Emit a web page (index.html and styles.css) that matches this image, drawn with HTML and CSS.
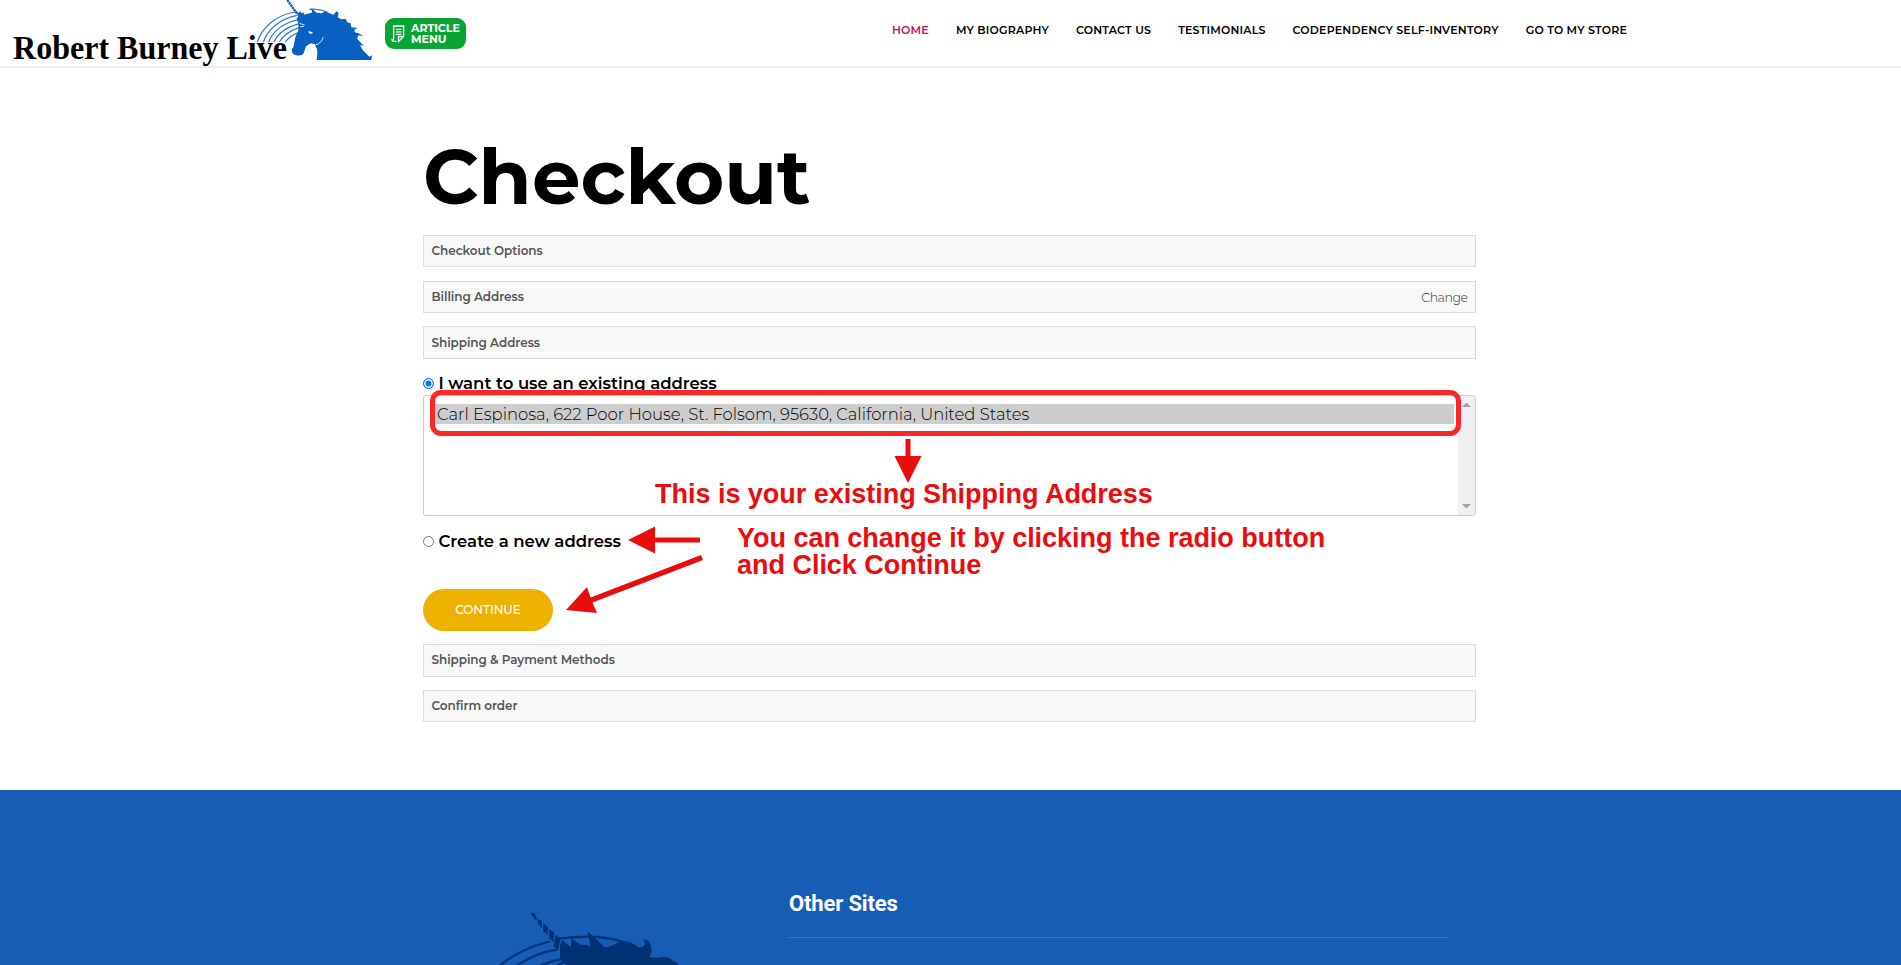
FILE: index.html
```
<!DOCTYPE html>
<html lang="en">
<head>
<meta charset="utf-8">
<title>Checkout</title>
<link rel="stylesheet" href="styles.css">
</head>
<body>
<header class="header">
  <svg class="logo" width="385" height="66" viewBox="0 0 385 66">
    <g transform="translate(240 0) scale(.33333)">
      <g fill="none" stroke="#2f78d0" stroke-width="3.6">
        <path d="M52 126C66 82 110 44 166 36"/>
        <path d="M70 126C82 90 118 56 172 46"/>
        <path d="M86 126C98 94 130 68 178 58"/>
        <path d="M102 126C114 100 142 80 180 71"/>
        <path d="M118 126C130 106 150 92 178 83"/>
        <path d="M136 126C146 112 160 103 176 97"/>
        <path d="M208 28C228 26 244 28 262 36"/>
      </g>
      <path d="M142 0L172 42" stroke="#0760c2" stroke-width="7" stroke-dasharray="7 1.5"/>
      <path fill="#0760c2" d="M165 32L173 40 182 34 184 40 191 37 192 44 203 41 216 38 214 24 230 38 245 40 256 34 265 38 280 44 290 34 296 40 293 52 304 58 316 56 323 68 318 66 332 70 334 82 354 84 344 88 344 97 356 100 370 108 354 106 352 117 366 132 372 137 360 135 368 150 388 170 396 166 394 180 230 180C232 160 234 150 228 141L224 132 212 130 198 139 191 160C186 169 170 168 160 162C153 154 155 148 160 142C164 128 164 108 174 96L176 82 174 66 170 56 175 48Z"/>
      <path fill="#fff" d="M204 94L218 96 216 102 207 100Z"/>
      <path fill="none" stroke="#fff" stroke-width="2.5" d="M250 112C246 124 238 132 226 135M178 70L194 75M180 80L192 79"/>
    </g>
    <text class="logo-text" x="13" y="59" textLength="274" lengthAdjust="spacingAndGlyphs">Robert Burney Live</text>
  </svg>
  <a class="article-btn">
    <svg width="14" height="18" viewBox="0 0 14 18" fill="none" stroke="#fff" stroke-width="1.3">
      <path d="M5.500 16.300H3Q1 16.300 1 14.300H2.600V1H12.600V11.500L7.500 16.500V11.500H12.600M4.800 4.300H10.400M4.800 6.800H10.400M4.800 9.300H10.400"/>
    </svg>
    <span class="article-label"><span>ARTICLE</span><span>MENU</span></span>
  </a>
  <nav class="nav">
    <a class="active">HOME</a>
    <a>MY BIOGRAPHY</a>
    <a>CONTACT US</a>
    <a>TESTIMONIALS</a>
    <a>CODEPENDENCY SELF-INVENTORY</a>
    <a>GO TO MY STORE</a>
  </nav>
</header>

<main class="checkout">
  <h1 class="title">Checkout</h1>
  <div class="panel">Checkout Options</div>
  <div class="panel panel-low">Billing Address <a class="change">Change</a></div>
  <div class="panel panel-low panel-shipping">Shipping Address</div>
  <label class="choice"><span class="radio checked"></span>I want to use an existing address</label>
  <div class="address-list">
    <div class="option">Carl Espinosa, 622 Poor House, St. Folsom, 95630, California, United States</div>
    <div class="scrollbar"><i class="up"></i><i class="down"></i></div>
  </div>
  <label class="choice choice-new"><span class="radio"></span>Create a new address</label>
  <a class="continue">CONTINUE</a>
  <div class="panel panel-payment">Shipping &amp; Payment Methods</div>
  <div class="panel">Confirm order</div>
</main>

<footer class="footer">
  <svg class="footer-logo" width="280" height="85" viewBox="0 0 840 255">
    <g fill="none" stroke="#03347a" stroke-width="7">
      <path d="M120 256C165 220 215 197 270 184"/>
      <path d="M172 256C210 230 250 215 292 208"/>
      <path d="M242 256Q275 242 308 237M298 176C360 168 430 166 490 186"/>
      <path d="M290 258L312 246"/>
    </g>
    <path fill="#003173" d="M211 98L222 100 230 110 229 123ZM233 116L246 123 245 144 233 130ZM250 131L264 141 262 165 249 152ZM267 148L283 157 280 187 267 173ZM287 165L301 175 295 211 281 199ZM307 181L333 202 334 175 364 195Q378 192 392 200L383 154 434 202Q462 198 476 186Q505 176 534 202C556 203 559 190 549 178C574 179 582 210 568 231Q590 236 612 231Q632 232 638 243L650 247 656 256H318L300 232 300 195Z"/>
  </svg>
  <section class="sites"><h2>Other Sites</h2></section>
</footer>

<div class="highlight"></div>
<svg class="arrow-layer" width="1901" height="965" viewBox="0 0 1901 965" fill="#e90d0d">
  <path d="M905.500 439H910.500V456H921.500L908 483L894.500 456H905.500Z"/>
  <path d="M628 540L655 526.500V537.500H700V542.500H655V553.500Z"/>
  <path d="M566 610L587 587L590.500 597.500L701 555L703 560L592.500 602.500L597 613Z"/>
</svg>
<p class="note note-existing">This is your existing Shipping Address</p>
<p class="note note-change">You can change it by clicking the radio button<br>and Click Continue</p>
</body>
</html>
```
FILE: styles.css
```
* { box-sizing: border-box; }
body {
  margin: 0;
  height: 965px;
  position: relative;
  overflow: hidden;
  background: #fff;
  color: #000;
  font-family: Montserrat, Inter, sans-serif;
}
.header {
  height: 68px;
  display: flex;
  align-items: flex-start;
  border-bottom: 2px solid #eee;
}
.logo { flex: none; overflow: visible; }
.logo-text { font: bold 33px "Liberation Serif", serif; }
.article-btn {
  width: 81px;
  height: 31px;
  margin-top: 18px;
  padding: 1px 0 0 6px;
  display: flex;
  align-items: center;
  gap: 6px;
  border-radius: 9px;
  background: #08a535;
  color: #fff;
}
.article-label {
  display: flex;
  flex-direction: column;
  font-size: 11px;
  font-weight: 700;
  line-height: 11px;
}
.nav {
  display: flex;
  gap: 27px;
  margin-left: 426px;
  padding-top: 22px;
  font-size: 11px;
  font-weight: 600;
  line-height: 16px;
  letter-spacing: .215px;
  white-space: nowrap;
}
.active { color: #c2125f; }

.checkout {
  width: 1053px;
  height: 722px;
  margin-left: 423px;
  padding-top: 68px;
  display: flex;
  flex-direction: column;
}
.title {
  margin: 0 0 7px;
  height: 92px;
  font-size: 76.8px;
  line-height: 82px;
  font-weight: 700;
}
.panel {
  height: 32px;
  flex: none;
  margin-bottom: 13.700px;
  padding: 0 7.500px 2px;
  display: flex;
  align-items: center;
  justify-content: space-between;
  border: 1px solid #dcdddf;
  background: #f8f8f8;
  color: #555;
  font-size: 12px;
  font-weight: 600;
  letter-spacing: -.050px;
}
.panel-low { padding-bottom: 0; }
.panel-shipping { height: 33px; margin-bottom: 13px; }
.panel-payment { height: 33px; margin-bottom: 13px; }
.change {
  font-size: 12.5px;
  font-weight: 300;
  letter-spacing: -.450px;
  color: #333;
  padding-top: 1px;
}
.choice {
  height: 22px;
  display: flex;
  align-items: center;
  gap: 4.500px;
  font-size: 16.500px;
  font-weight: 600;
}
.radio {
  width: 11px;
  height: 11px;
  border: 1px solid #767676;
  border-radius: 50%;
}
.checked {
  border-color: #0075ff;
  background: #0075ff;
  box-shadow: inset 0 0 0 1.5px #fff;
}
.address-list {
  height: 121px;
  margin-top: 1px;
  display: flex;
  justify-content: space-between;
  border: 1px solid #ccc;
  border-radius: 3px;
}
.option {
  width: 1021px;
  height: 20px;
  margin: 8px 0 0 9px;
  padding-left: 4px;
  background: #cdcdcd;
  color: #000;
  font-size: 16.450px;
  font-weight: 300;
  line-height: 21px;
}
.scrollbar {
  width: 17px;
  padding: 7px 4px;
  display: flex;
  flex-direction: column;
  justify-content: space-between;
  background: #f0f0f0;
}
.up, .down {
  border: 4px solid transparent;
  border-top-width: 0;
  border-bottom-color: #a3a3a3;
}
.down { transform: scaleY(-1); }
.choice-new { margin-top: 14px; }
.continue {
  width: 130px;
  height: 42px;
  margin: 37px 0 13px;
  border-radius: 21px;
  background: #edb100;
  color: #fff;
  font-size: 12px;
  font-weight: 500;
  line-height: 41px;
  letter-spacing: -.080px;
  text-align: center;
}
.footer {
  height: 175px;
  display: flex;
  align-items: flex-start;
  background: #185db5;
}
.footer-logo { margin: 90px 49px 0 460px; }
.sites {
  width: 660px;
  height: 148px;
  padding-top: 101px;
  border-bottom: 1px solid #3b76c8;
}
.sites h2 {
  margin: 0;
  color: #fff;
  font: 700 22px/26px Roboto, sans-serif;
  letter-spacing: -.150px;
}

/* Annotations drawn over the page */
.highlight {
  position: absolute;
  left: 430px;
  top: 390px;
  width: 1031px;
  height: 46px;
  border: 5px solid #f92828;
  border-radius: 11px;
}
.arrow-layer { position: absolute; left: 0; top: 0; }
.note {
  position: absolute;
  margin: 0;
  color: #e90d0d;
  font: bold 27px/27px "Liberation Sans", sans-serif;
  letter-spacing: -.020px;
  white-space: nowrap;
}
.note-existing { left: 655px; top: 481px; }
.note-change { left: 737px; top: 525px; }
```
